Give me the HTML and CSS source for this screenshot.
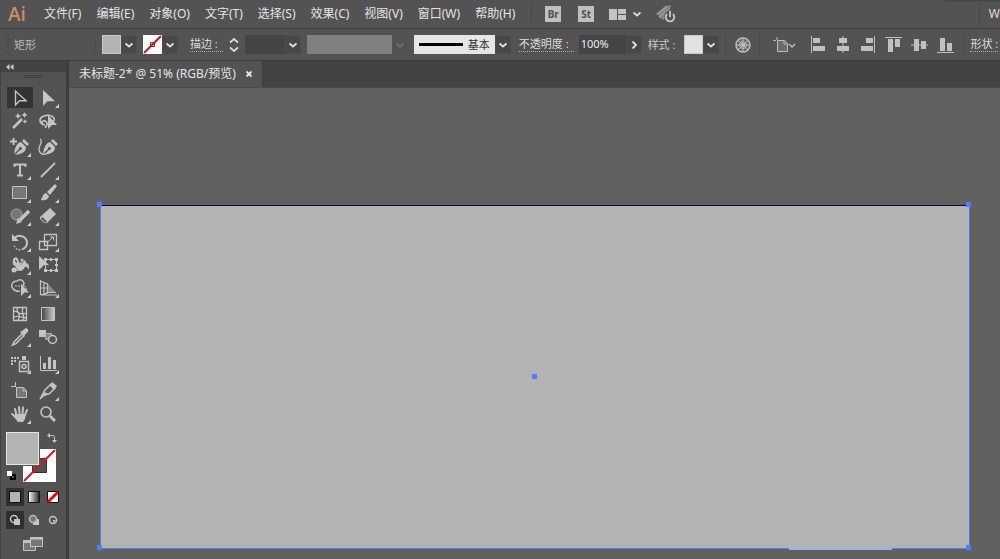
FILE: index.html
```html
<!DOCTYPE html>
<html lang="zh-CN">
<head>
	<meta charset="UTF-8">
	<title>未标题-2</title>
	<link rel="stylesheet" href="styles.css">
</head>
<body>
<svg class="defs" aria-hidden="true">
	<symbol id="down" viewBox="0 0 10 10"><path d="M1.5 3.5 5 6.5 8.5 3.5" fill="none" stroke="currentColor" stroke-width="1.8"/></symbol>
	<linearGradient id="grad"><stop offset="0" stop-color="#444"/><stop offset="1" stop-color="#ccc"/></linearGradient>
	<linearGradient id="grad2"><stop offset="0" stop-color="#fff"/><stop offset="1" stop-color="#222"/></linearGradient>
</svg>

<!-- 菜单栏 -->
<header class="menubar">
	<span class="logo">Ai</span>
	<nav class="menus">
		<button>文件(F)</button>
		<button>编辑(E)</button>
		<button>对象(O)</button>
		<button>文字(T)</button>
		<button>选择(S)</button>
		<button>效果(C)</button>
		<button>视图(V)</button>
		<button>窗口(W)</button>
		<button>帮助(H)</button>
	</nav>
	<div class="apps">
		<button class="app">Br</button>
		<button class="app">St</button>
		<button class="arrange" aria-label="排列文档">
			<svg width="17" height="11" viewBox="0 0 17 11" fill="#c4c4c4"><path d="M0 0h8v11H0zM9 0h8v5H9zM9 6h8v5H9z"/></svg>
			<svg width="10" height="10"><use href="#down"/></svg>
		</button>
		<button class="gpu" aria-label="GPU 性能">
			<svg width="20" height="18" viewBox="0 0 20 18"><path d="M0 9 9 1l6-1-1 5-5 2-3 5zM2 12l7-4-1 7z" fill="#858585"/><path d="m1 9 10-7M3 12l9-7" stroke="#aaa"/><circle cx="14" cy="12" r="5.500" fill="#535353"/><path d="M11 9a4.300 4.300 0 1 0 6 0M14 6v6" fill="none" stroke="#c8c8c8" stroke-width="1.800"/></svg>
		</button>
	</div>
	<button class="workspace">W</button>
</header>

<!-- 控制栏 -->
<div class="control">
	<span class="grip"></span>
	<span class="kind">矩形</span>
	<button class="combo" aria-label="填色"><i class="chip"></i><i class="arrow"><svg width="10" height="10"><use href="#down"/></svg></i></button>
	<button class="combo" aria-label="描边颜色"><i class="chip none"><svg width="19" height="19" viewBox="0 0 19 19"><path d="M7.500 7.500h4v4h-4z" fill="none" stroke="#444"/><path d="M1 18 18 1" stroke="#d8131b" stroke-width="2"/></svg></i><i class="arrow"><svg width="10" height="10"><use href="#down"/></svg></i></button>
	<div class="weight">
		<label class="label" for="weight">描边 :</label>
		<button class="spin" aria-label="调整粗细"><svg width="12" height="16" viewBox="0 0 12 16" fill="none" stroke="#d8d8d8" stroke-width="1.800"><path d="M2 5.500 6 2l4 3.500M2 10.500 6 14l4-3.500"/></svg></button>
		<input id="weight" class="weight-input" type="text">
		<button class="arrow" aria-label="描边粗细"><svg width="10" height="10"><use href="#down"/></svg></button>
	</div>
	<button class="combo" disabled aria-label="变量宽度"><i class="profile"></i><i class="arrow"><svg width="10" height="10"><use href="#down"/></svg></i></button>
	<div class="brush">
		<select aria-label="画笔定义"><option>基本</option></select>
		<i class="arrow"><svg width="10" height="10"><use href="#down"/></svg></i>
	</div>
	<div class="opacity">
		<label class="label" for="opacity">不透明度 :</label>
		<input id="opacity" type="text" value="100%">
		<button class="arrow" aria-label="调整不透明度"><svg width="10" height="10" viewBox="0 0 10 10"><path d="M3.500 1.500 7 5 3.500 8.500" fill="none" stroke="currentColor" stroke-width="1.800"/></svg></button>
	</div>
	<span class="style-label">样式 :</span>
	<button class="combo" aria-label="图形样式"><i class="chip light"></i><i class="arrow"><svg width="10" height="10"><use href="#down"/></svg></i></button>
	<button class="icon globe" aria-label="重新着色图稿"><svg width="16" height="16" viewBox="0 0 16 16" fill="none" stroke="#bdbdbd"><circle cx="8" cy="8" r="7" fill="#666" stroke-width="1.500"/><circle cx="8" cy="8" r="3.500"/><path d="M8 1v14M1 8h14M3 3l10 10M13 3 3 13"/><circle cx="8" cy="8" r="1.500" fill="#bdbdbd"/></svg></button>
	<button class="icon artboard" aria-label="对齐画板"><svg width="24" height="16" viewBox="0 0 24 16" fill="none" stroke="#bababa"><path d="M4 0v3M0 3.500h3M4.500 3.500h7l3 3v8h-10z" fill="#6c6c6c"/><path d="M11 4v3h3"/><path d="m16 7 3 3 3-3" stroke-width="1.500"/></svg></button>
	<div class="align">
		<button class="icon" aria-label="左对齐"><svg width="16" height="17" viewBox="0 0 16 17" fill="#c0c0c0"><path d="M1 0h1v17H1zM3 2h7v5H3zM3 10h12v5H3z"/></svg></button>
		<button class="icon" aria-label="水平居中"><svg width="16" height="17" viewBox="0 0 16 17" fill="#c0c0c0"><path d="M7.500 0h1v17h-1zM4 2h8v5H4zM2 10h12v5H2z"/></svg></button>
		<button class="icon" aria-label="右对齐"><svg width="16" height="17" viewBox="0 0 16 17" fill="#c0c0c0"><path d="M14 0h1v17h-1zM6 2h7v5H6zM1 10h12v5H1z"/></svg></button>
		<button class="icon" aria-label="顶对齐"><svg width="17" height="16" viewBox="0 0 17 16" fill="#c0c0c0"><path d="M0 0h17v1H0zM3 2h5v13H3zM10 2h5v8h-5z"/></svg></button>
		<button class="icon" aria-label="垂直居中"><svg width="17" height="16" viewBox="0 0 17 16" fill="#c0c0c0"><path d="M0 7.500h17v1H0zM3 2h5v12H3zM10 4h5v8h-5z"/></svg></button>
		<button class="icon" aria-label="底对齐"><svg width="17" height="16" viewBox="0 0 17 16" fill="#c0c0c0"><path d="M0 15h17v1H0zM3 1h5v13H3zM10 6h5v8h-5z"/></svg></button>
	</div>
	<a class="label shape" href="#">形状 :</a>
</div>

<div class="main">
	<!-- 工具面板 -->
	<aside class="tools">
		<button class="collapse" aria-label="折叠"><svg width="8" height="6" viewBox="0 0 8 6" fill="#ccc"><path d="M3.500 0v6L0 3zM7.500 0v6L4 3z"/></svg></button>
		<span class="handle"></span>
		<div class="group">
			<button class="tool on" aria-label="选择"><svg viewBox="0 0 20 20"><path class="l" d="M5.500 3v14l4-4.300h6.500z" stroke-width="1.400"/></svg></button>
			<button class="tool more" aria-label="直接选择"><svg viewBox="0 0 20 20"><path class="f" d="M5 2v16l4.500-4.800H17z"/></svg></button>
			<button class="tool" aria-label="魔棒"><svg viewBox="0 0 20 20"><path class="l" d="m3 17 9-9" stroke-width="2.500"/><path class="f" d="m8 2 1 2 2 1-2 1-1 2-1-2-2-1 2-1zM14.500 1l1 2 2 1-2 1-1 2-1-2-2-1 2-1zM15 8l.8 1.700 1.700.8-1.700.8L15 13l-.8-1.700-1.700-.8 1.700-.8z"/></svg></button>
			<button class="tool" aria-label="套索"><svg viewBox="0 0 20 20"><path class="l" d="M7 14c-6-1-6-6-3-8 4-3 10-2 12 1 1 2 0 3-1 4M7 14c-3 0-4-3-2-4s5 1 4 4l-2 3" stroke-width="1.600"/><path class="f" d="M10 4v14l4-4h5z"/></svg></button>
		</div>
		<div class="group">
			<button class="tool more" aria-label="钢笔"><svg viewBox="0 0 20 20"><path class="l" d="M3.500 1v7M0 4.500h7" stroke-width="2"/><path class="f" fill-rule="evenodd" d="m14 2 5 5-2 2-5-5zM11 5l5 5c0 5-4 7-11 8l5-5a1.500 1.500 0 1 0-1-1l-5 5C5 10 7 6 11 5z"/></svg></button>
			<button class="tool" aria-label="曲率"><svg viewBox="0 0 20 20"><path class="l" d="M2 2c4 3-2 7-1 11 1 4 4 5 7 4" stroke-width="1.300"/><path class="f" fill-rule="evenodd" d="m15 2 5 5-2 2-5-5zM12 5l5 5c0 5-4 7-11 8l5-5a1.500 1.500 0 1 0-1-1l-5 5C6 10 8 6 12 5z"/></svg></button>
			<button class="tool more" aria-label="文字"><svg viewBox="0 0 20 20"><path class="l" d="M4.500 7V4.500h11V7M10 4v12M7 15.500h6" stroke-width="2"/></svg></button>
			<button class="tool more" aria-label="直线"><svg viewBox="0 0 20 20"><path class="l" d="M3 17 17 3" stroke-width="1.800"/></svg></button>
			<button class="tool more" aria-label="矩形"><svg viewBox="0 0 20 20"><path d="M2.500 3.500h14v12h-14z" fill="#777" stroke="#c4c4c4"/></svg></button>
			<button class="tool more" aria-label="画笔"><svg viewBox="0 0 20 20"><path class="f" d="M17 1l2 2-7 9-3-3zM8 10l3 3c-1 4-4 5-8.500 4C5 15 4 11 8 10z"/></svg></button>
			<button class="tool more" aria-label="Shaper"><svg viewBox="0 0 20 20"><circle cx="6.500" cy="8.500" r="5.500" fill="#777" stroke="#aaa"/><path class="l" d="m10 14 9-9" stroke-width="3.500"/><path class="f" d="m8 12 4 4-6 2z"/></svg></button>
			<button class="tool more" aria-label="橡皮擦"><svg viewBox="0 0 20 20"><path class="f" d="m12 2 6 6-9 9H6l-4-4v-2z"/><path d="m4.500 11 4.500 4.500-1 1H6.500L3 13v-1z" fill="#606060"/></svg></button>
		</div>
		<div class="group">
			<button class="tool more" aria-label="旋转"><svg viewBox="0 0 20 20"><path class="l" d="M4 6.500C9 1 17 5 17 11c0 3-2 5-4 6" stroke-width="2"/><path class="l" d="M13 17c-4 2-8 0-9-4" stroke-width="1.500" stroke-dasharray="1.500 1.500"/><path class="f" d="M2 2v7h7z"/></svg></button>
			<button class="tool more" aria-label="比例缩放"><svg viewBox="0 0 20 20"><path class="l" d="M6.500 2.500h12v11h-12zM1.500 9.500h8v8h-8z" stroke-width="1.300"/><path class="l" d="m10 10 5-5M12 5h3.500v3.500"/></svg></button>
			<button class="tool more" aria-label="宽度"><svg viewBox="0 0 20 20"><path class="f" d="M3 5c0-3 4-4 5-1l2 5c1 2 2-1 3-1 0-4 3-3 3 0 3 0 4 4 2 7 0-3-2-4-3-3-2 4-5 5-7 3l-2-3c-2-2-4-2-3-7zm2 0c0 2 1 2 2 3 0-2-1-4-2-3z" fill-rule="evenodd"/><path class="l" d="m4 15 8-8M4 15c3 1 5 0 7-2" stroke-width="1.500"/><circle class="f" cx="4" cy="15" r="2.500"/><circle class="f" cx="12" cy="5" r="1.500"/></svg></button>
			<button class="tool" aria-label="自由变换"><svg viewBox="0 0 20 20"><path class="l" d="M7.500 4.500h11v11h-11z"/><path class="f" d="M6 3h3v3H6zM17 3h3v3h-3zM6 14h3v3H6zM17 14h3v3h-3zM12 3h2v3h-2zM12 14h2v3h-2zM17 9h3v2h-3zM1 1v14l5-5h5z"/></svg></button>
			<button class="tool more" aria-label="形状生成器"><svg viewBox="0 0 20 20"><path class="l" d="M13 8c3-5-3-8-6-5-4 0-6 3-5 6s5 5 8 4" stroke-width="1.500"/><path class="l" d="M5 8h8c3 0 4 3 3 5" stroke-dasharray="2 1"/><path class="f" d="M11 6v12l3.500-3.500H19z"/></svg></button>
			<button class="tool more" aria-label="透视网格"><svg viewBox="0 0 20 20"><path class="l" d="M2.500 2v15M2.500 3l7 3v9l-7 2M6 4v12M2.500 10h7M10 7l6 7M10 10l5 4M3 17h16M8 14.500h10" stroke-width="1.200"/><path d="m10 6 7 8h-7z" fill="#888"/></svg></button>
		</div>
		<div class="group">
			<button class="tool" aria-label="网格"><svg viewBox="0 0 20 20"><path class="l" d="M3.500 3.500h13v13h-13zM3 8c5-3 6 5 13 1M3 14c4-4 9 0 13 0M8 3c-4 5 5 6 0 13M14 3c-5 4 2 7-1 13" stroke-width="1.300"/></svg></button>
			<button class="tool" aria-label="渐变"><svg viewBox="0 0 20 20"><path d="M3.500 3.500h13v13h-13z" fill="url(#grad)" stroke="#c4c4c4"/></svg></button>
			<button class="tool more" aria-label="吸管"><svg viewBox="0 0 20 20"><path class="l" d="m12 7-8 8-1.500 3L6 16.500l8-8" stroke-width="1.500"/><path class="f" d="m10 5 2-1 3-2.500c2-1 4 1 3 3L15 8l-1 2z"/></svg></button>
			<button class="tool" aria-label="混合"><svg viewBox="0 0 20 20"><path class="f" d="M1 3h7v7H1z"/><path d="M7.500 6.500h6v6h-6z" fill="#888" stroke="#aaa"/><circle cx="14.500" cy="12.500" r="4" fill="#555" stroke="#c4c4c4" stroke-width="1.500"/></svg></button>
		</div>
		<div class="group low">
			<button class="tool more" aria-label="符号喷枪"><svg viewBox="0 0 20 20"><path class="f" d="M1 3h2v2H1zM4 3h2v2H4zM7 3h2v2H7zM1 6h2v2H1zM4 6h2v2H4zM1 9h2v2H1zM12 2h4v4h-4z"/><path class="l" d="M9.500 7.500h9v10h-9z" stroke-width="1.500"/><circle class="l" cx="14" cy="12.500" r="2" stroke-width="1.500"/></svg></button>
			<button class="tool more" aria-label="柱形图"><svg viewBox="0 0 20 20"><path class="l" d="M2.500 2v14.500H19"/><path class="f" d="M5 9h3v6H5zM10 3h3v12h-3zM15 6h3v9h-3z"/></svg></button>
		</div>
		<div class="group low">
			<button class="tool" aria-label="画板"><svg viewBox="0 0 20 20"><path class="l" d="M5.500 1v5M1 5.500h5"/><path d="M6.500 6.500h7l3 3v7h-10z" fill="#777" stroke="#c4c4c4"/><path class="l" d="M13 7v3h3"/></svg></button>
			<button class="tool more" aria-label="切片"><svg viewBox="0 0 20 20"><path class="l" d="m13 3 4 4-6 6-6 1-3 4 5-9z" stroke-width="1.500"/><path class="f" d="m14 1 5 4-3 4-4-4zM2 18l5-7 3 2z"/></svg></button>
			<button class="tool more" aria-label="抓手"><svg viewBox="0 0 20 20"><path class="l" stroke-linecap="round" d="M6.500 11 5 5M9.500 10 9 3M12.500 10l.5-6.500M15 11l2-5M6 13l-4-3" stroke-width="2"/><path class="f" d="M5.500 10h10.500l-1 5-2 3H8l-5-6z"/></svg></button>
			<button class="tool" aria-label="缩放"><svg viewBox="0 0 20 20"><circle class="l" cx="8" cy="8" r="5" stroke-width="1.600"/><path class="l" d="m12 12 5 5" stroke-width="2.800"/></svg></button>
		</div>
		<div class="colors">
			<button class="stroke-box" aria-label="描边"><svg width="33" height="33" viewBox="0 0 33 33"><path d="M0 0h33v33H0z" fill="#fff"/><path d="M9.500 9.500h14v14h-14z" fill="#535353" stroke="#333"/><path d="M1 32 32 1" stroke="#d8131b" stroke-width="2"/></svg></button>
			<button class="fill-box" aria-label="填色"></button>
			<button class="swap" aria-label="互换填色和描边"><svg width="10" height="10" viewBox="0 0 10 10" fill="#c4c4c4"><path d="M3 0v5L0 2.500zM5 7h5L7.500 10z"/><path d="M3 2.500h2.500q2 0 2 2V7" fill="none" stroke="#c4c4c4"/></svg></button>
			<button class="reset" aria-label="默认填色和描边"><svg width="9" height="9" viewBox="0 0 9 9"><path d="M4 4h4v4H4z" fill="none" stroke="#000" stroke-width="2"/><path d="M0 0h5v5H0z" fill="#fff"/></svg></button>
		</div>
		<div class="modes">
			<button class="mode on" aria-label="颜色"><svg width="14" height="14" viewBox="0 0 14 14"><path d="M1.500 1.500h11v11h-11z" fill="#b3b3b3" stroke="#111"/></svg></button>
			<button class="mode" aria-label="渐变"><svg width="14" height="14" viewBox="0 0 14 14"><path d="M1.500 1.500h11v11h-11z" fill="url(#grad2)" stroke="#111"/></svg></button>
			<button class="mode" aria-label="无"><svg width="14" height="14" viewBox="0 0 14 14"><path d="M1.500 1.500h11v11h-11z" fill="#fff" stroke="#111"/><path d="m2 12 10-10" stroke="#e00b14" stroke-width="3"/></svg></button>
		</div>
		<div class="modes draw">
			<button class="mode on" aria-label="正常绘图"><svg width="12" height="12" viewBox="0 0 12 12"><circle class="l" cx="5" cy="5" r="3.500" stroke-width="1.500"/><path class="f" d="M5 5h6v6H5z"/></svg></button>
			<button class="mode" aria-label="背面绘图"><svg width="12" height="12" viewBox="0 0 12 12"><path class="f" d="M5 5h6v6H5z"/><circle cx="5" cy="5" r="3.500" fill="#777" stroke="#bbb" stroke-width="1.500"/></svg></button>
			<button class="mode" aria-label="内部绘图"><svg width="12" height="12" viewBox="0 0 12 12"><circle class="l" cx="6" cy="6" r="3.500" stroke-width="1.500"/><path class="f" d="M6 6h3L6 9z"/></svg></button>
		</div>
		<button class="screen" aria-label="更改屏幕模式"><svg width="22" height="16" viewBox="0 0 22 16" fill="#777" stroke="#c4c4c4"><path d="M1.500 4.500h12v10h-12z"/><path d="M1 6h12" stroke-width="2"/><path d="M8.500 1.500h12v9h-12z"/><path d="M8 2.500h13" stroke-width="2"/></svg></button>
	</aside>

	<!-- 文档窗口 -->
	<section class="document">
		<div class="tabs">
			<div class="tab">
				<span>未标题-2* @ 51% (RGB/预览)</span>
				<button class="close" aria-label="关闭"><svg width="6" height="6" viewBox="0 0 6 6"><path d="m.5.5 5 5M5.500.5l-5 5" stroke="#eee" stroke-width="1.800"/></svg></button>
			</div>
		</div>
		<div class="canvas">
			<div class="shape-rect">
				<i class="point tl"></i>
				<i class="point tr"></i>
				<i class="point bl"></i>
				<i class="point br"></i>
				<i class="point center"></i>
				<i class="edge"></i>
			</div>
		</div>
	</section>
</div>
</body>
</html>
```
FILE: styles.css
```css
* {box-sizing:border-box;}
html,body {height:100%; margin:0;}
body {display:flex; flex-direction:column; overflow:hidden; background:#535353; color:#dcdcdc; font:11px/16px "Noto Sans","Noto Sans CJK SC",sans-serif;}
button,input,select {margin:0; padding:0; border:0; background:none; color:inherit; font:inherit; border-radius:0;}
button {display:flex; align-items:center; justify-content:center; flex:none; white-space:nowrap;}
svg {display:block; flex:none;}
i {display:block; font-style:normal;}
.defs {position:absolute; width:0; height:0;}
.f {fill:#c4c4c4;}
.l {fill:none; stroke:#c4c4c4;}

/* 菜单栏 */
.menubar {position:relative; display:flex; align-items:center; flex:none; height:29px; padding-left:8px; border-bottom:1px solid #3c3c3c; overflow:hidden;}
.menubar::after {content:""; position:absolute; right:0; top:0; width:55px; height:2px; background:linear-gradient(#404040,#505050);}
.logo {width:36px; flex:none; color:#c98c66; font:600 19px/24px "Open Sans","Noto Sans",sans-serif;}
.menus {display:flex; gap:15px; font-size:12px; color:#e4e4e4;}
.apps {display:flex; align-items:center; margin-left:16px; padding-left:13px; border-left:1px solid #484848;}
.app {width:16px; height:16px; margin-right:17px; background:#c0c0c0; color:#505050; font-weight:bold; font-size:10px;}
.arrange {gap:6px; margin-left:-2px;}
.gpu {margin-left:14px;}
.workspace {margin-left:auto; padding-left:9px; height:22px; border-left:1px solid #484848; font-size:12px;}

/* 控制栏 */
.control {display:flex; align-items:center; flex:none; height:32px; padding-left:6px; border-bottom:1px solid #3c3c3c; overflow:hidden; white-space:nowrap;}
.grip {width:3px; height:20px; flex:none; background:repeating-linear-gradient(#444 0 1px,#5a5a5a 1px 2px);}
.kind {width:82px; margin-left:5px; flex:none; color:#bcbcbc; border-right:1px solid #4c4c4c; margin-right:6px;}
.combo,.weight,.brush,.opacity {display:flex; align-items:center; flex:none; margin-right:6px;}
.chip {width:19px; height:19px; border:1px solid #c8c8c8; background:#b3b3b3;}
.chip.none {border:0; background:#fff;}
.chip.light {background:#e2e2e2;}
.arrow {display:flex; align-items:center; justify-content:center; flex:none; width:16px; height:19px; background:#484848; border:1px solid #4e4e4e; color:#e0e0e0;}
.weight {margin-left:6px;}
.label {flex:none; padding-right:5px; color:#dcdcdc; line-height:14px; border-bottom:1px dotted #aaa; text-decoration:none;}
.spin {width:12px; margin:0 5px;}
.weight-input,.opacity input {width:40px; height:19px; background:#444;}
.profile {width:85px; height:19px; background:#808080;}
.combo:disabled .arrow {background:none; color:#707070; border:0;}
.brush {margin-right:8px;}
.brush select {width:81px; height:19px; padding-left:54px; appearance:none; background:linear-gradient(#000,#000) 5px 8px/44px 3px no-repeat #e6e6e6; color:#333;}
.opacity input {width:47px; padding:0 0 2px 2px; margin-left:5px; color:#eee;}
.style-label {flex:none; margin-right:9px; color:#c8c8c8;}
.icon {height:22px;}
.globe {width:35px; border-left:1px solid #4a4a4a; border-right:1px solid #4a4a4a;}
.artboard {width:50px;}
.align {display:flex; align-items:center; gap:9px; flex:none; padding-right:9px; border-right:1px solid #4a4a4a;}
.shape {margin-left:6px; padding:0;}

.main {display:flex; flex:1; min-height:0;}

/* 工具面板 */
.tools {display:flex; flex-direction:column; flex:none; width:69px; border-left:1px solid #434343; border-right:3px solid #3e3e3e;}
.collapse {justify-content:flex-start; height:11px; padding-left:5px; background:#434343;}
.handle {width:19px; height:4px; margin:3px 0 7px 23px; flex:none; background:repeating-linear-gradient(#414141 0 1px,#535353 1px 2px);}
.group {display:grid; grid-template-columns:28px 28px; padding-left:5px; margin-bottom:3px; flex:none;}
.group.low {margin-top:1px;}
.tool {position:relative; width:28px; height:23px;}
.tool svg {width:20px; height:20px;}
.tool.on {background:#333 content-box; padding:1px;}
.more::after {content:""; position:absolute; right:3px; bottom:1px; border:2px solid; border-color:transparent #ccc #ccc transparent;}
.colors {position:relative; flex:none; height:50px; margin:4px 0 0 5px;}
.colors button {position:absolute;}
.fill-box {left:0; top:0; width:33px; height:33px; background:#b3b3b3; border:1px solid #e4e4e4; outline:1px solid #555;}
.stroke-box {left:17px; top:17px;}
.swap {left:41px; top:1px;}
.reset {left:1px; top:39px;}
.modes {display:flex; gap:1px; flex:none; margin:6px 0 0 5px;}
.mode {width:18px; height:18px;}
.mode.on {background:#303030;}
.modes.draw {margin-top:5px;}
.screen {margin-top:6px; width:64px; height:18px;}

/* 文档 */
.document {display:flex; flex-direction:column; flex:1; min-width:0;}
.tabs {display:flex; flex:none; height:27px; background:#434343; border-bottom:1px solid #4a4a4a;}
.tab {display:flex; align-items:center; gap:10px; padding:0 10px; background:#535353; color:#e4e4e4; border-right:1px solid #3c3c3c; font-size:12px;}
.canvas {position:relative; flex:1; background:#616161;}
.shape-rect {position:absolute; left:31px; right:30px; top:117px; bottom:10px; background:#b3b3b3; border:1px solid #4f7dea; border-top-color:#0c0c30;}
.point {position:absolute; width:5px; height:5px; background:#4f80f5;}
.tl {left:-4px; top:-4px;}
.tr {right:-2px; top:-4px;}
.bl {left:-4px; bottom:-2px;}
.br {right:-2px; bottom:-2px;}
.center {left:50%; top:50%; margin:-3px;}
.edge {position:absolute; right:77px; bottom:-2px; width:103px; height:2px; background:#9cb2e0;}
```
